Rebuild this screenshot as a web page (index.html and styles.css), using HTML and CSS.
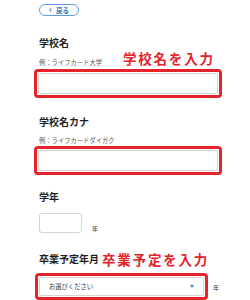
FILE: index.html
```html
<!DOCTYPE html>
<html lang="ja">
<head>
<meta charset="utf-8">
<link rel="stylesheet" href="styles.css">
</head>
<body>
<div class="page">
  <a class="back"><span class="chev">‹</span>戻る</a>

  <section class="field f1">
    <div class="label">学校名</div>
    <div class="hint">例：ライフカード大学</div>
    <div class="mark"><div class="input"></div></div>
    <span class="note n1">学校名を入力</span>
  </section>

  <section class="field f2">
    <div class="label">学校名カナ</div>
    <div class="hint">例：ライフカードダイガク</div>
    <div class="mark"><div class="input"></div></div>
  </section>

  <section class="field f3">
    <div class="label">学年</div>
    <div class="grade">
      <div class="small-input"></div>
      <span class="unit">年</span>
    </div>
  </section>

  <section class="field f4">
    <div class="label-row">
      <div class="label">卒業予定年月</div>
      <span class="note n2">卒業予定を入力</span>
    </div>
    <div class="select-row">
      <div class="mark sel-mark">
        <div class="select"><span>お選びください</span><span class="tri"></span></div>
      </div>
      <span class="unit">年</span>
    </div>
  </section>
</div>
</body>
</html>
```
FILE: styles.css
```css
html, body {
  margin: 0;
  padding: 0;
  background: #fff;
}
body {
  font-family: "Noto Sans CJK JP", "Noto Sans", sans-serif;
  color: #222;
  width: 250px;
  height: 300px;
  overflow: hidden;
}
.page {
  padding: 4px 0 0 34px;
  position: relative;
}
.back {
  display: flex;
  align-items: center;
  justify-content: center;
  gap: 4px;
  margin-left: 5px;
  width: 40px;
  height: 12px;
  box-sizing: border-box;
  border: 1.5px solid #5b9be0;
  border-radius: 7px;
  color: #3474c0;
  font-size: 6.5px;
  font-weight: 700;
  line-height: 1;
}
.chev {
  font-size: 9px;
  line-height: 6px;
  margin-top: -1px;
}
.field {
  position: relative;
}
.label {
  font-size: 10px;
  font-weight: 700;
  line-height: 12px;
  padding-left: 5px;
  color: #1e1e1e;
}
.hint {
  font-size: 6.3px;
  line-height: 8px;
  padding-left: 5px;
  color: #555;
}
.f1 { margin-top: 21px; }
.f1 .hint { margin-top: 10px; }
.f1 .mark { margin-top: 2px; }
.f2 { margin-top: 18px; }
.f2 .hint { margin-top: 9px; }
.f2 .mark { margin-top: 1px; }
.f3 { margin-top: 16px; }
.f4 { margin-top: 20px; }

.mark {
  width: 188px;
  height: 29px;
  box-sizing: border-box;
  border: 3px solid #e5232b;
  border-radius: 4px;
  padding: 1px;
}
.input {
  height: 100%;
  box-sizing: border-box;
  border: 1px solid #d4d4d4;
  border-radius: 2px;
  background: #fff;
}
.note {
  position: absolute;
  color: #e5232b;
  font-size: 13.5px;
  font-weight: 700;
  line-height: 14px;
  letter-spacing: 1.8px;
  white-space: nowrap;
}
.n1 {
  left: 89px;
  top: 14px;
}
.label-row {
  display: flex;
  align-items: center;
  gap: 3px;
  height: 12px;
}
.n2 {
  position: static;
  margin-top: -1px;
}
.grade {
  display: flex;
  align-items: flex-end;
  gap: 10px;
  margin-top: 10px;
  padding-left: 5px;
}
.small-input {
  width: 43px;
  height: 20px;
  box-sizing: border-box;
  border: 1px solid #d4d4d4;
  border-radius: 3px;
}
.unit {
  font-size: 6px;
  line-height: 8px;
  color: #333;
}
.select-row {
  display: flex;
  align-items: center;
  gap: 5px;
  margin-top: 8px;
  margin-left: 1px;
}
.sel-mark {
  width: 173px;
  height: 27px;
}
.select {
  height: 100%;
  box-sizing: border-box;
  border: 1px solid #d4d4d4;
  border-radius: 2px;
  display: flex;
  align-items: center;
  justify-content: space-between;
  padding: 0 9px 0 9px;
  font-size: 6.3px;
  color: #333;
}
.tri {
  width: 0;
  height: 0;
  border-left: 2px solid transparent;
  border-right: 2px solid transparent;
  border-top: 3px solid #3a7fd0;
}
.select-row .unit {
  margin-top: 2px;
}
```
